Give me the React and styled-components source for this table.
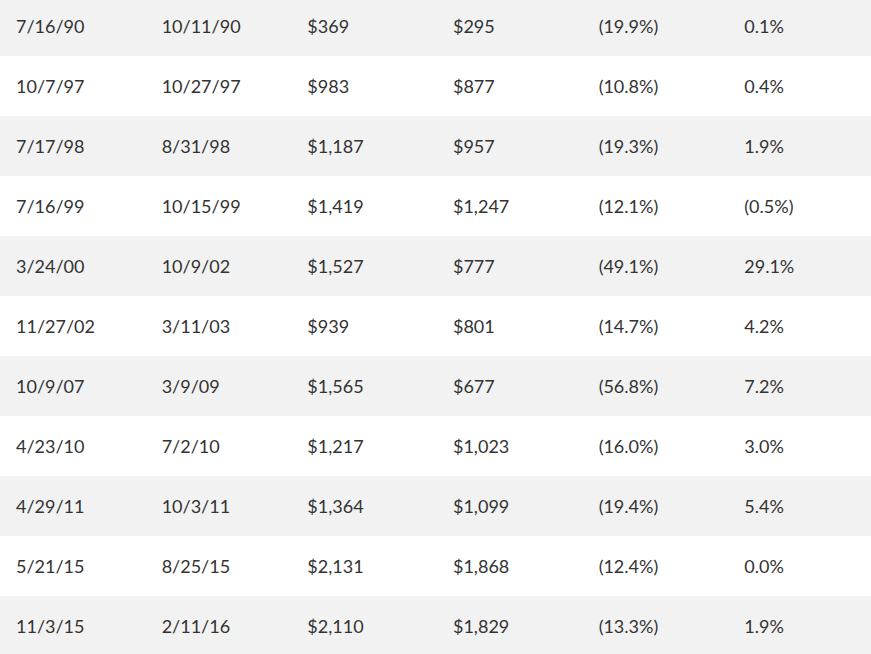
import React from "react";
import styled, { createGlobalStyle } from "styled-components";

const GlobalStyle = createGlobalStyle`
  html, body {
    margin: 0;
    padding: 0;
    background: #fff;
    overflow: hidden;
  }
  body {
    font-family: Lato, "Open Sans", sans-serif;
  }
`;

const Table = styled.table`
  width: 874px;
  margin-top: -4px;
  border-collapse: collapse;
  table-layout: fixed;
`;

const Row = styled.tr`
  height: 60px;
  background: ${(p) => (p.$shaded ? "#f2f2f2" : "#fff")};
`;

const Cell = styled.td`
  padding: 0 16px;
  font-size: 18px;
  color: #333;
  vertical-align: middle;
  white-space: nowrap;
`;

const rows = [
  ["7/16/90", "10/11/90", "$369", "$295", "(19.9%)", "0.1%"],
  ["10/7/97", "10/27/97", "$983", "$877", "(10.8%)", "0.4%"],
  ["7/17/98", "8/31/98", "$1,187", "$957", "(19.3%)", "1.9%"],
  ["7/16/99", "10/15/99", "$1,419", "$1,247", "(12.1%)", "(0.5%)"],
  ["3/24/00", "10/9/02", "$1,527", "$777", "(49.1%)", "29.1%"],
  ["11/27/02", "3/11/03", "$939", "$801", "(14.7%)", "4.2%"],
  ["10/9/07", "3/9/09", "$1,565", "$677", "(56.8%)", "7.2%"],
  ["4/23/10", "7/2/10", "$1,217", "$1,023", "(16.0%)", "3.0%"],
  ["4/29/11", "10/3/11", "$1,364", "$1,099", "(19.4%)", "5.4%"],
  ["5/21/15", "8/25/15", "$2,131", "$1,868", "(12.4%)", "0.0%"],
  ["11/3/15", "2/11/16", "$2,110", "$1,829", "(13.3%)", "1.9%"],
];

export default function App() {
  return (
    <>
      <GlobalStyle />
      <Table>
        <tbody>
          {rows.map((row, i) => (
            <Row key={i} $shaded={i % 2 === 0}>
              {row.map((value, j) => (
                <Cell key={j}>{value}</Cell>
              ))}
            </Row>
          ))}
        </tbody>
      </Table>
    </>
  );
}
